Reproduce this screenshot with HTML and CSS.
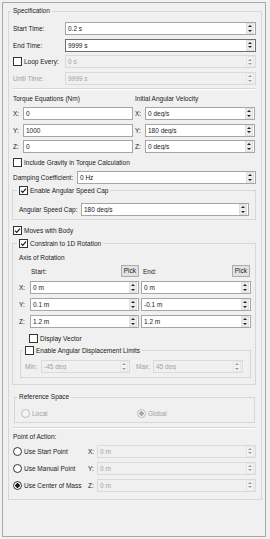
FILE: index.html
```html
<!DOCTYPE html>
<html lang="en">
<head>
  <meta charset="UTF-8" />
  <title>Specification</title>
  <link rel="stylesheet" href="styles.css">
</head>
<body>
  <div class="frame">
    <fieldset class="group spec">
      <legend>Specification</legend>

      <div class="times">
        <span>Start Time:</span>
        <div class="spin"><span class="val">0.2 s</span><i class="arrows"></i></div>
        <span>End Time:</span>
        <div class="spin focus"><span class="val">9999 s</span><i class="arrows"></i></div>
        <span class="check"><span class="box"></span>Loop Every:</span>
        <div class="spin off"><span class="val">0 s</span><i class="arrows"></i></div>
        <span class="dim">Until Time:</span>
        <div class="spin off"><span class="val">9999 s</span><i class="arrows"></i></div>
      </div>

      <div class="sep"></div>

      <div class="vec-cols">
        <div class="vec">
          <div class="head">Torque Equations (Nm)</div>
          <div class="vec-grid">
            <span>X:</span><div class="spin"><span class="val">0</span></div>
            <span>Y:</span><div class="spin"><span class="val">1000</span></div>
            <span>Z:</span><div class="spin"><span class="val">0</span></div>
          </div>
        </div>
        <div class="vec">
          <div class="head">Initial Angular Velocity</div>
          <div class="vec-grid">
            <span>X:</span><div class="spin"><span class="val">0 deg/s</span><i class="arrows"></i></div>
            <span>Y:</span><div class="spin"><span class="val">180 deg/s</span><i class="arrows"></i></div>
            <span>Z:</span><div class="spin"><span class="val">0 deg/s</span><i class="arrows"></i></div>
          </div>
        </div>
      </div>

      <div class="check gravity"><span class="box"></span>Include Gravity in Torque Calculation</div>

      <div class="damping">
        <span>Damping Coefficient:</span>
        <div class="spin"><span class="val">0 Hz</span><i class="arrows"></i></div>
      </div>

      <fieldset class="group speedcap">
        <legend><span class="check"><span class="box on"><svg viewBox="0 0 7 7"><path d="M1 3.6l1.7 1.8L6 1.6"/></svg></span>Enable Angular Speed Cap</span></legend>
        <div class="speed-row">
          <span>Angular Speed Cap:</span>
          <div class="spin"><span class="val">180 deg/s</span><i class="arrows"></i></div>
        </div>
      </fieldset>

      <div class="check moves"><span class="box on"><svg viewBox="0 0 7 7"><path d="M1 3.6l1.7 1.8L6 1.6"/></svg></span>Moves with Body</div>

      <fieldset class="group constrain">
        <legend><span class="check"><span class="box on"><svg viewBox="0 0 7 7"><path d="M1 3.6l1.7 1.8L6 1.6"/></svg></span>Constrain to 1D Rotation</span></legend>
        <div class="axis-title">Axis of Rotation</div>
        <div class="axis">
          <span></span>
          <div class="pick-row start"><span>Start:</span><span class="pick">Pick</span></div>
          <div class="pick-row end"><span>End:</span><span class="pick">Pick</span></div>

          <span>X:</span>
          <div class="spin"><span class="val">0 m</span><i class="arrows"></i></div>
          <div class="spin"><span class="val">0 m</span><i class="arrows"></i></div>

          <span>Y:</span>
          <div class="spin"><span class="val">0.1 m</span><i class="arrows"></i></div>
          <div class="spin"><span class="val">-0.1 m</span><i class="arrows"></i></div>

          <span>Z:</span>
          <div class="spin"><span class="val">1.2 m</span><i class="arrows"></i></div>
          <div class="spin"><span class="val">1.2 m</span><i class="arrows"></i></div>
        </div>

        <div class="check display-vec"><span class="box"></span>Display Vector</div>

        <fieldset class="group limits">
          <legend><span class="check"><span class="box"></span>Enable Angular Displacement Limits</span></legend>
          <div class="limit-row">
            <span class="dim">Min:</span>
            <div class="spin off"><span class="val">-45 deg</span><i class="arrows"></i></div>
            <span class="dim max">Max:</span>
            <div class="spin off"><span class="val">45 deg</span><i class="arrows"></i></div>
          </div>
        </fieldset>
      </fieldset>

      <fieldset class="group refspace">
        <legend class="dim-legend">Reference Space</legend>
        <div class="radio-row">
          <span class="check dim"><span class="radio off"></span>Local</span>
          <span class="check dim"><span class="radio off on"></span>Global</span>
        </div>
      </fieldset>

      <div class="sep"></div>

      <div class="head poa-head">Point of Action:</div>
      <div class="poa">
        <span class="check"><span class="radio"></span>Use Start Point</span>
        <span>X:</span>
        <div class="spin off"><span class="val">0 m</span><i class="arrows"></i></div>

        <span class="check"><span class="radio"></span>Use Manual Point</span>
        <span>Y:</span>
        <div class="spin off"><span class="val">0 m</span><i class="arrows"></i></div>

        <span class="check"><span class="radio on"></span>Use Center of Mass</span>
        <span>Z:</span>
        <div class="spin off"><span class="val">0 m</span><i class="arrows"></i></div>
      </div>
    </fieldset>
  </div>
</body>
</html>
```

FILE: styles.css
```css
* { box-sizing: border-box; }

body {
  margin: 0;
  padding: 2px;
  background-color: #f0f0f0;
  font-family: "Liberation Sans", Arial, sans-serif;
  font-size: 6.5px;
  color: #1a1a1a;
}

.frame {
  width: 264px;
  height: 535px;
  border: 1px solid #a9a9a9;
  padding: 4px 3px 0 5px;
}

/* group boxes */
.group {
  margin: 0;
  padding: 0;
  min-width: 0;
  border: 1px solid #d7d7d7;
}

.group > legend {
  margin-left: -2px;
  padding: 0 2px;
  line-height: 8px;
}

.spec {
  padding: 0 5px 7px 4px;
}

.dim, .dim-legend { color: #a0a0a0; }
.dim-legend { color: #1a1a1a; }

/* inputs */
.spin {
  display: flex;
  align-items: center;
  height: 13px;
  background-color: #fff;
  border: 1px solid #a6a6a6;
}

.spin.focus { border-color: #6e6e6e; }

.spin.off {
  background-color: #f0f0f0;
  border-color: #dadada;
  color: #a3a3a3;
}

.spin .val {
  flex: 1;
  padding-left: 2px;
  white-space: nowrap;
  overflow: hidden;
}

.arrows {
  display: flex;
  flex-direction: column;
  justify-content: space-around;
  align-items: center;
  width: 8px;
  height: 11px;
  margin-right: 1px;
  background-color: #ececec;
  border: 1px solid #e0e0e0;
}

.arrows::before,
.arrows::after {
  content: "";
  width: 0;
  height: 0;
  border-left: 2px solid transparent;
  border-right: 2px solid transparent;
}

.arrows::before { border-bottom: 2px solid #222; }
.arrows::after { border-top: 2px solid #222; }

.spin.off .arrows { background-color: #f3f3f3; border-color: #e6e6e6; }
.spin.off .arrows::before { border-bottom-color: #9c9c9c; }
.spin.off .arrows::after { border-top-color: #9c9c9c; }

/* check boxes and radios */
.check {
  display: flex;
  align-items: center;
  gap: 2px;
  line-height: 9px;
  white-space: nowrap;
}

.box {
  flex: none;
  width: 9px;
  height: 9px;
  background-color: #fff;
  border: 1px solid #333;
}

.box svg {
  display: block;
  width: 7px;
  height: 7px;
  fill: none;
  stroke: #1a1a1a;
  stroke-width: 1.2;
}

.radio {
  flex: none;
  width: 9px;
  height: 9px;
  border-radius: 50%;
  background-color: #fff;
  border: 1px solid #333;
}

.radio.on { background: radial-gradient(circle, #1a1a1a 0 2px, #fff 2.4px); }
.radio.off { background-color: #f4f4f4; border-color: #bdbdbd; }
.radio.off.on { background: radial-gradient(circle, #a8a8a8 0 2px, #f4f4f4 2.4px); }

.sep {
  height: 2px;
  margin-right: 1px;
  border-top: 1px solid #d5d5d5;
  border-bottom: 1px solid #fff;
}

.head { line-height: 8px; }

/* time rows */
.times {
  display: grid;
  grid-template-columns: 52px 1fr;
  grid-auto-rows: 13px;
  row-gap: 3.7px;
  align-items: center;
  margin-top: 7px;
  margin-bottom: 3px;
}

/* torque / velocity */
.vec-cols {
  display: grid;
  grid-template-columns: 120px 1fr;
  column-gap: 2px;
  margin-top: 5px;
}

.vec-grid {
  display: grid;
  grid-template-columns: 10px 1fr;
  grid-auto-rows: 13px;
  row-gap: 3.5px;
  align-items: center;
  margin-top: 4px;
}

.vec:last-child .vec-grid { margin-right: 1px; }

.gravity { margin-top: 4.5px; }

.damping {
  display: grid;
  grid-template-columns: 64px 1fr;
  align-items: center;
  margin-top: 4.5px;
}

.damping .spin { height: 13px; }

/* angular speed cap */
.speedcap {
  margin: 1.5px 0 0 -1px;
  padding: 0 6px 3px 6px;
}

.group > legend .check { line-height: 9px; }

.speed-row {
  display: grid;
  grid-template-columns: 62px 1fr;
  align-items: center;
  margin-top: 8.5px;
}

.moves { margin-top: 6px; }

/* constrain */
.constrain {
  margin: 3.5px 0 0 -1px;
  padding: 0 6px 6px 6px;
}

.axis-title {
  line-height: 8px;
  margin-top: 6px;
}

.axis {
  display: grid;
  grid-template-columns: 9px 109px 110px;
  grid-template-rows: 12px;
  grid-auto-rows: 13px;
  column-gap: 2px;
  row-gap: 4px;
  align-items: center;
  margin-top: 3.5px;
}

.pick-row {
  display: flex;
  justify-content: space-between;
  align-items: center;
  height: 12px;
}

.pick-row.start { padding-left: 1px; }
.pick-row.end { padding: 0 1px 0 2px; }

.pick {
  height: 12px;
  padding: 0 2px;
  line-height: 10px;
  background-color: #e1e1e1;
  border: 1px solid #adadad;
}

.display-vec {
  margin: 5.5px 0 0 10px;
}

.limits {
  margin: 3.5px -2px 0 1px;
  padding: 0 6px 4px 4px;
}

.limit-row {
  display: grid;
  grid-template-columns: 16px 89px 23px 90px;
  align-items: center;
  margin-top: 5px;
}

.limit-row .max { padding-left: 6px; }

/* reference space */
.refspace {
  margin: 8px 1px 0 1px;
  padding: 0 4px 4px 4px;
}

.radio-row {
  display: grid;
  grid-template-columns: 116px 1fr;
  padding-left: 2px;
  margin-top: 7.5px;
}

.refspace + .sep { margin-top: 4px; }

/* point of action */
.poa-head { margin-top: 4px; }

.poa {
  display: grid;
  grid-template-columns: 75px 9px 1fr;
  grid-auto-rows: 13px;
  row-gap: 4px;
  align-items: center;
  margin-top: 4px;
}
```
